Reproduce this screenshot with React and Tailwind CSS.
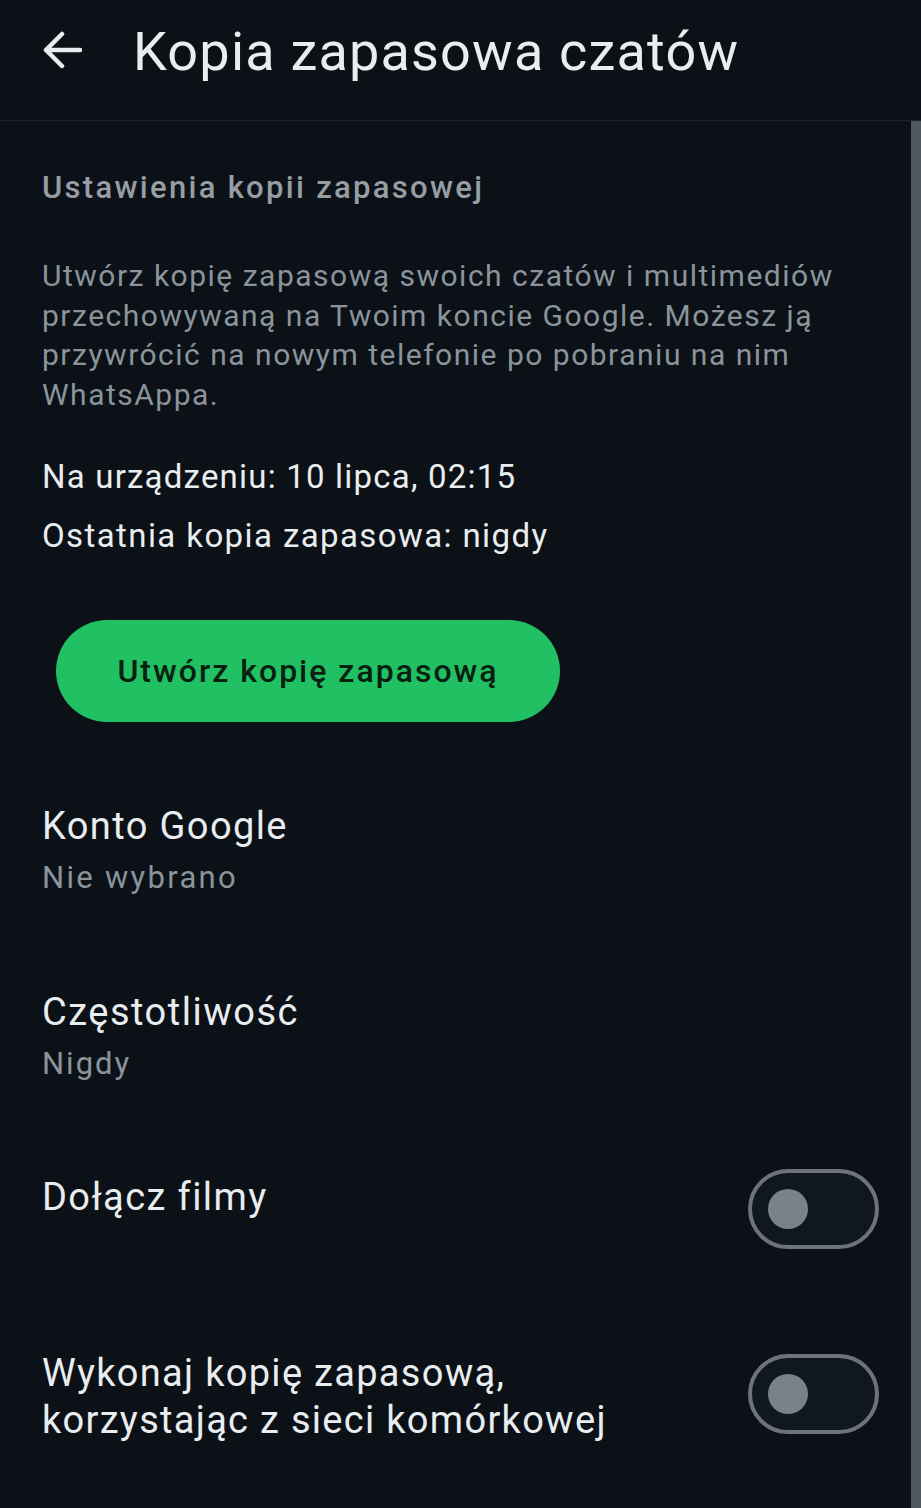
export default function App() {
  return (
    <div
      className="flex h-[1508px] w-[921px] flex-col overflow-hidden bg-[#0b1117] text-[#e9edef]"
      style={{ fontFamily: "Roboto, 'Noto Sans', sans-serif" }}
    >
      <header className="flex h-[121px] shrink-0 items-start border-b border-[#1c242a] pl-[42px] pt-[25px]">
        <svg className="mt-[5px] h-[40px] w-[40px] shrink-0" viewBox="0 0 40 40" fill="none">
          <path d="M38 20H4M20 4L4 20l16 16" stroke="#e9edef" strokeWidth="4.5" strokeLinecap="round" strokeLinejoin="round" />
        </svg>
        <h1 className="ml-[51px] text-[54px] leading-[54px] font-normal tracking-[1.2px]">Kopia zapasowa czatów</h1>
      </header>

      <div className="flex flex-1">
        <main className="flex-1 pl-[42px] pr-[32px]">
          <h2 className="mt-[47px] text-[31px] leading-[40px] font-medium tracking-[2.3px] text-[#969ea4]">Ustawienia kopii zapasowej</h2>
          <p className="mt-[48px] text-[30px] leading-[39.5px] tracking-[1.5px] text-[#8a949a]">
            Utwórz kopię zapasową swoich czatów i multimediów
            <br />
            przechowywaną na Twoim koncie Google. Możesz ją
            <br />
            przywrócić na nowym telefonie po pobraniu na nim
            <br />
            WhatsAppa.
          </p>
          <p className="mt-[41px] text-[33px] leading-[44px] tracking-[1.2px]">Na urządzeniu: 10 lipca, 02:15</p>
          <p className="mt-[15px] text-[33px] leading-[44px] tracking-[1.4px]">Ostatnia kopia zapasowa: nigdy</p>

          <button className="ml-[14px] mt-[62px] flex h-[102px] w-[504px] items-center justify-center rounded-full bg-[#21c063] text-[32px] font-medium tracking-[2px] text-[#08200f]">
            Utwórz kopię zapasową
          </button>

          <div className="mt-[80px]">
            <p className="text-[38px] leading-[48px] tracking-[1.4px]">Konto Google</p>
            <p className="mt-[8px] text-[31px] leading-[40px] tracking-[2.3px] text-[#8a949a]">Nie wybrano</p>
          </div>

          <div className="mt-[90px]">
            <p className="text-[38px] leading-[48px] tracking-[1.5px]">Częstotliwość</p>
            <p className="mt-[8px] text-[31px] leading-[40px] tracking-[2px] text-[#8a949a]">Nigdy</p>
          </div>

          <div className="mt-[85px] flex items-start justify-between">
            <p className="mt-[4px] text-[38px] leading-[48px] tracking-[1.4px]">Dołącz filmy</p>
            <Toggle />
          </div>

          <div className="mt-[101px] flex items-start justify-between">
            <p className="text-[38px] leading-[47px] tracking-[1.3px]">
              Wykonaj kopię zapasową,
              <br />
              korzystając z sieci komórkowej
            </p>
            <div className="mt-[4px]">
              <Toggle />
            </div>
          </div>
        </main>
        <div className="w-[10px] shrink-0 bg-[#50575d]" />
      </div>
    </div>
  );
}

function Toggle() {
  return (
    <div className="flex h-[80px] w-[131px] shrink-0 items-center rounded-full border-[4px] border-[#6d7479] bg-[#10171d] pl-[16px]">
      <div className="h-[40px] w-[40px] rounded-full bg-[#7a8187]" />
    </div>
  );
}
